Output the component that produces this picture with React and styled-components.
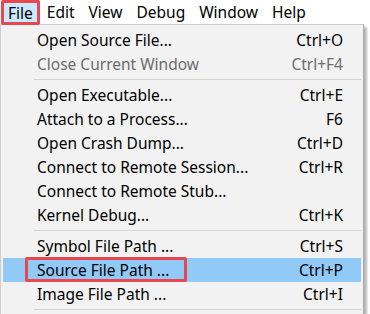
import React from 'react';
import styled, { createGlobalStyle } from 'styled-components';

const GlobalStyle = createGlobalStyle`
  html, body {
    margin: 0;
    padding: 0;
    background: #ffffff;
    overflow: hidden;
  }
  body {
    font-family: "Noto Sans", "Open Sans", sans-serif;
    font-size: 15.5px;
    color: #000000;
  }
`;

const Screen = styled.div`
  width: 370px;
  height: 314px;
  position: relative;
  overflow: hidden;
  background: #ffffff;
`;

const MenuBar = styled.div`
  display: flex;
  align-items: stretch;
  height: 24px;
  padding-left: 1px;
  background: #ffffff;
`;

const BarItem = styled.div`
  display: flex;
  align-items: center;
  padding: 0 7px;
  margin-right: ${props => props.gap}px;
  line-height: 24px;
  position: relative;
  background: ${props => (props.open ? '#cce8ff' : 'transparent')};
  box-shadow: ${props => (props.open ? 'inset 0 0 0 3px #e8474f' : 'none')};
  height: ${props => (props.open ? '25px' : '24px')};
  box-sizing: border-box;
  border-radius: 2px;
  z-index: 2;
`;

const Dropdown = styled.div`
  position: relative;
  width: 364px;
  padding: 3px 2px 0;
  background: #f2f2f2;
  border: 1px solid #cccccc;
  border-right-color: #a9a9a9;
  box-sizing: border-box;
  height: 310px;
  box-shadow: 3px 3px 2px rgba(0, 0, 0, 0.28);
`;

const Row = styled.div`
  display: flex;
  align-items: center;
  justify-content: space-between;
  height: 24px;
  padding: 0 18px 0 34px;
  position: relative;
  color: ${props => (props.disabled ? '#6d6d6d' : '#000000')};
  background: ${props => (props.active ? '#91c9f7' : 'transparent')};
`;

const Label = styled.span`
  white-space: nowrap;
`;

const Shortcut = styled.span`
  white-space: nowrap;
`;

const Separator = styled.div`
  height: 7px;
  display: flex;
  align-items: center;
  padding-left: 31px;
  &::after {
    content: '';
    flex: 1;
    height: 1px;
    background: #d5d5d5;
  }
`;

const Annotation = styled.div`
  position: absolute;
  left: 22px;
  top: -1px;
  width: 162px;
  height: 25px;
  border: 3px solid #e8474f;
  border-radius: 2px;
  box-sizing: border-box;
`;

const barItems = [
  { label: 'File', gap: 0, open: true },
  { label: 'Edit', gap: 0 },
  { label: 'View', gap: 0 },
  { label: 'Debug', gap: 0 },
  { label: 'Window', gap: 0 },
  { label: 'Help', gap: 0 },
];

const menu = [
  { label: 'Open Source File...', key: 'Ctrl+O' },
  { label: 'Close Current Window', key: 'Ctrl+F4', disabled: true },
  'sep',
  { label: 'Open Executable...', key: 'Ctrl+E' },
  { label: 'Attach to a Process...', key: 'F6' },
  { label: 'Open Crash Dump...', key: 'Ctrl+D' },
  { label: 'Connect to Remote Session...', key: 'Ctrl+R' },
  { label: 'Connect to Remote Stub...', key: '' },
  { label: 'Kernel Debug...', key: 'Ctrl+K' },
  'sep',
  { label: 'Symbol File Path ...', key: 'Ctrl+S' },
  { label: 'Source File Path ...', key: 'Ctrl+P', active: true },
  { label: 'Image File Path ...', key: 'Ctrl+I' },
  'sep',
  { label: '', key: '' },
];

export default function App() {
  return (
    <Screen>
      <GlobalStyle />
      <MenuBar>
        {barItems.map(item => (
          <BarItem key={item.label} open={item.open} gap={item.gap}>
            {item.label}
          </BarItem>
        ))}
      </MenuBar>
      <Dropdown>
        {menu.map((item, i) =>
          item === 'sep' ? (
            <Separator key={i} />
          ) : (
            <Row key={i} disabled={item.disabled} active={item.active}>
              <Label>{item.label}</Label>
              <Shortcut>{item.key}</Shortcut>
              {item.active && <Annotation />}
            </Row>
          )
        )}
      </Dropdown>
    </Screen>
  );
}
